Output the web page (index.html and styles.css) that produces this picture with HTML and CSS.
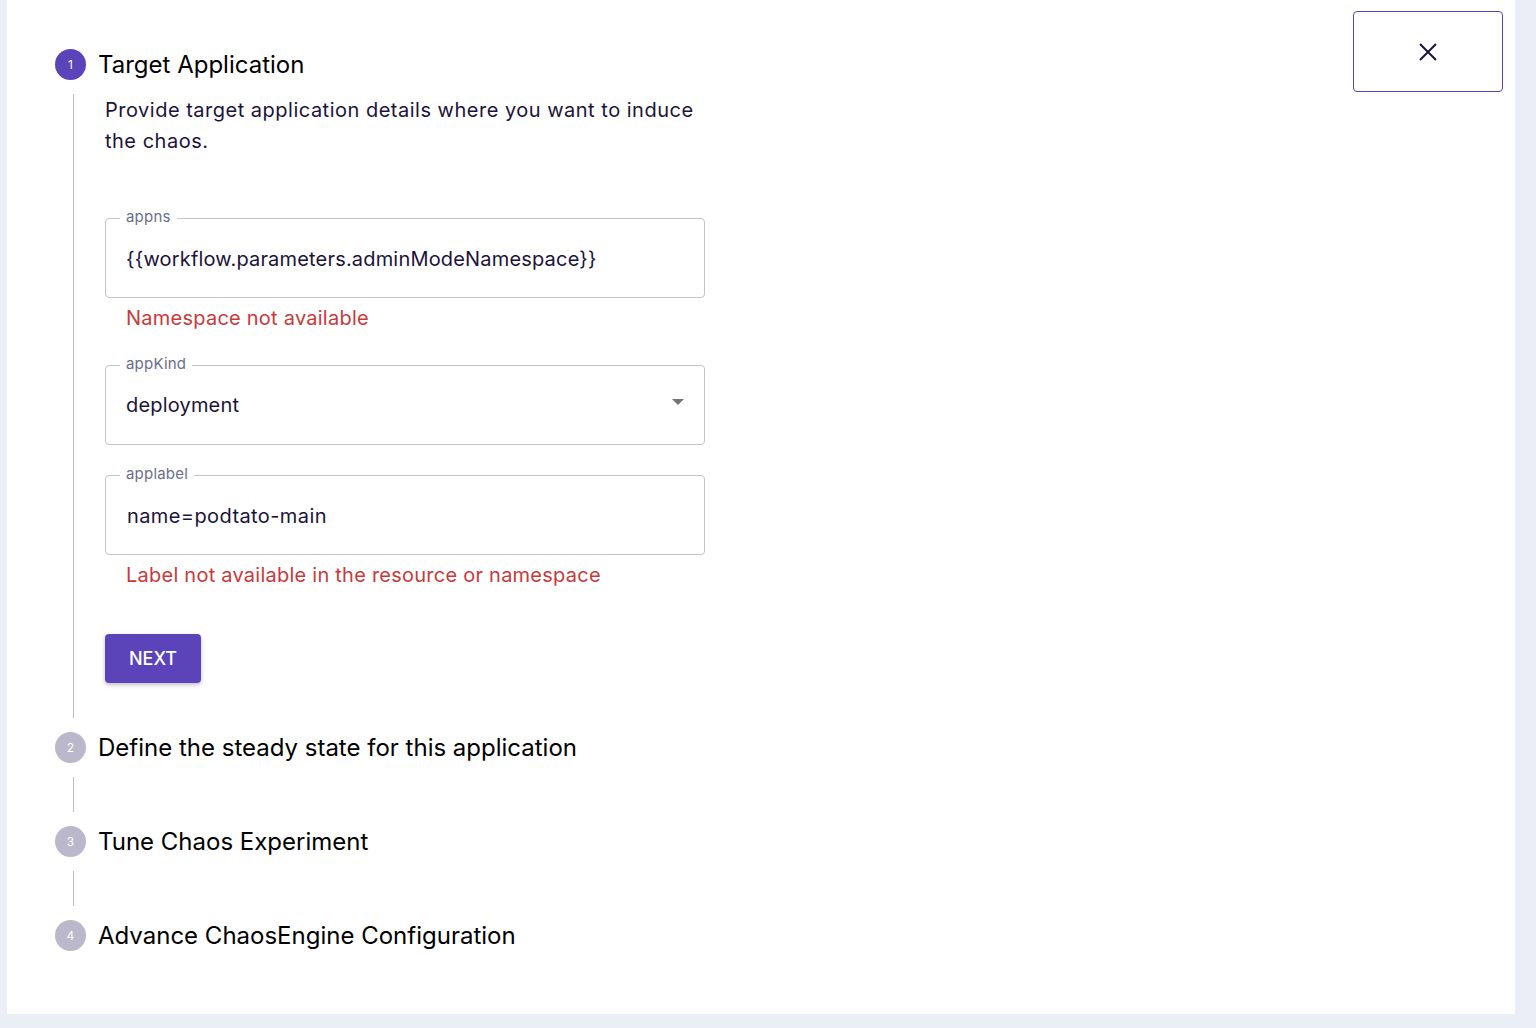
FILE: index.html
```html
<!DOCTYPE html>
<html lang="en">
<head>
<meta charset="utf-8">
<title>Target Application</title>
<link rel="stylesheet" href="styles.css">
</head>
<body>
<div class="panel">
  <div class="stepper">
    <div class="step">
      <div class="step-head">
        <span class="dot active">1</span>
        <span class="step-title">Target Application</span>
      </div>
      <div class="step-body">
        <p class="desc">Provide target application details where you want to induce the chaos.</p>
        <div class="field">
          <span class="legend">appns</span>
          <span class="value">{{workflow.parameters.adminModeNamespace}}</span>
        </div>
        <div class="error">Namespace not available</div>
        <div class="field select">
          <span class="legend">appKind</span>
          <span class="value">deployment</span>
          <svg class="caret" width="12" height="6" viewBox="0 0 12 6"><path d="M0 0h12L6 6z" fill="#757575"/></svg>
        </div>
        <div class="field gap">
          <span class="legend">applabel</span>
          <span class="value shift">name=podtato-main</span>
        </div>
        <div class="error">Label not available in the resource or namespace</div>
        <button class="next">NEXT</button>
      </div>
    </div>
    <div class="step">
      <div class="step-head">
        <span class="dot">2</span>
        <span class="step-title">Define the steady state for this application</span>
      </div>
      <div class="step-body empty"></div>
    </div>
    <div class="step">
      <div class="step-head">
        <span class="dot">3</span>
        <span class="step-title">Tune Chaos Experiment</span>
      </div>
      <div class="step-body empty"></div>
    </div>
    <div class="step">
      <div class="step-head">
        <span class="dot">4</span>
        <span class="step-title">Advance ChaosEngine Configuration</span>
      </div>
    </div>
  </div>
  <button class="close" aria-label="Close">
    <svg width="18" height="18" viewBox="0 0 18 18"><path d="M1 1L17 17M17 1L1 17" stroke="#1c1339" stroke-width="2" fill="none"/></svg>
  </button>
</div>
</body>
</html>
```

FILE: styles.css
```css
* { box-sizing: border-box; }
html, body { margin: 0; padding: 0; }
body {
  background: #ebeef6;
  font-family: Inter, "Noto Sans", "Liberation Sans", sans-serif;
  color: #1c1339;
  height: 1028px;
  overflow: hidden;
}
.panel {
  margin-left: 7px;
  width: 1508px;
  height: 1014px;
  background: #ffffff;
  display: flex;
  justify-content: space-between;
  align-items: flex-start;
}
.stepper {
  padding-top: 48.5px;
  padding-left: 48px;
  display: flex;
  flex-direction: column;
}
.step-head {
  display: flex;
  align-items: center;
  height: 31px;
}
.dot {
  width: 31px;
  height: 31px;
  border-radius: 50%;
  background: #bab8ca;
  color: #ffffff;
  font-size: 12px;
  display: flex;
  align-items: center;
  justify-content: center;
  flex-shrink: 0;
}
.dot.active { background: #5b44ba; }
.step-title {
  margin-left: 12px;
  font-size: 24px;
  color: #000000;
  white-space: nowrap;
}
.step-body {
  margin: 14px 0 14px 18px;
  border-left: 1px solid #bdbdbd;
  padding-left: 31px;
  padding-bottom: 35px;
  width: 632px;
}
.step-body.empty { height: 35px; padding: 0; }
.desc {
  margin: 0;
  font-size: 20px;
  line-height: 31px;
  width: 600px;
  letter-spacing: 0.5px;
  padding-top: 1px;
}
.field {
  position: relative;
  margin-top: 61px;
  width: 600px;
  height: 80px;
  border: 1px solid #c4c4c4;
  border-radius: 4px;
  display: flex;
  align-items: center;
  padding-left: 20px;
  padding-top: 2px;
}
.field.select { margin-top: 35px; padding-top: 0; }
.field.gap { margin-top: 30px; padding-top: 2px; }
.legend {
  position: absolute;
  top: -11px;
  left: 14px;
  padding: 0 6px;
  background: #ffffff;
  font-size: 15px;
  line-height: 18px;
  color: #6b6e8a;
  letter-spacing: 0.2px;
}
.value {
  font-size: 20px;
  color: #1c1339;
  letter-spacing: 0.18px;
}
.value.shift { margin-left: 1px; letter-spacing: 0.4px; }
.caret {
  position: absolute;
  right: 20px;
  top: 33px;
}
.error {
  margin-top: 8px;
  padding-left: 21px;
  font-size: 20px;
  line-height: 24px;
  color: #c83a3a;
  letter-spacing: 0.24px;
}
.next {
  display: block;
  margin-top: 47px;
  width: 96px;
  height: 49px;
  border: none;
  border-radius: 4px;
  background: #5b44ba;
  color: #ffffff;
  font-family: inherit;
  font-size: 18px;
  font-weight: 500;
  box-shadow: 0 2px 4px rgba(0,0,0,0.25);
  padding: 0;
}
.close {
  margin-top: 11px;
  margin-right: 12px;
  width: 150px;
  height: 81px;
  background: #ffffff;
  border: 1px solid #5b44ba;
  border-radius: 4px;
  display: flex;
  align-items: center;
  justify-content: center;
  padding: 0;
}
```
